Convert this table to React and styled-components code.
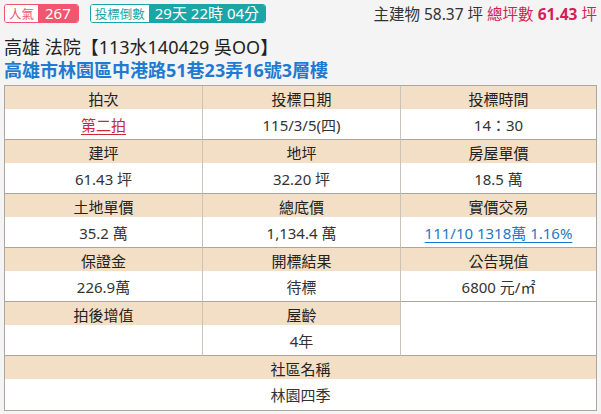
import React from "react";
import styled, { createGlobalStyle } from "styled-components";

const Global = createGlobalStyle`
  html, body { margin: 0; padding: 0; background: #f4f4f4; }
  body { font-family: "Noto Sans", "Noto Sans CJK TC", sans-serif; color: #333; }
`;

const Page = styled.div`
  padding: 4px 4px 0 4px;
`;

const TopBar = styled.div`
  display: flex;
  justify-content: space-between;
  align-items: center;
  height: 19px;
`;

const Badges = styled.div`
  display: flex;
  gap: 11px;
`;

const Badge = styled.div`
  display: flex;
  height: 19px;
  border: 1px solid ${(p) => p.$color};
  border-radius: 3px;
  overflow: hidden;
  box-sizing: border-box;
`;

const BadgeLabel = styled.span`
  display: flex;
  align-items: center;
  padding: 0 4px;
  background: #fff;
  color: ${(p) => p.$color};
  font-size: 12.5px;
  font-family: "Noto Sans CJK TC", sans-serif;
`;

const BadgeValue = styled.span`
  display: flex;
  align-items: center;
  padding: 0 ${(p) => p.$pad || 6}px;
  background: ${(p) => p.$color};
  color: #fff;
  font-size: 15px;
  line-height: 17px;
  white-space: nowrap;
  font-family: "Noto Sans", "Noto Sans CJK TC", sans-serif;
`;

const Area = styled.div`
  font-size: 15.5px;
  color: #333;
  font-family: "Noto Sans", "Noto Sans CJK TC", sans-serif;
  white-space: nowrap;
`;

const Total = styled.span`
  color: #d21f55;
  b { font-weight: 700; }
`;

const Title = styled.div`
  margin-top: 13px;
  font-size: 18px;
  line-height: 23px;
  color: #222;
  white-space: nowrap;
`;

const Address = styled.div`
  font-size: 18px;
  line-height: 23px;
  font-weight: 700;
  color: #1f7bd1;
  white-space: nowrap;
`;

const Table = styled.div`
  margin-top: 3px;
  display: grid;
  grid-template-columns: 198px 198px 1fr;
  border: 1px solid #aca79c;
  background: #fff;
`;

const Cell = styled.div`
  display: flex;
  align-items: center;
  justify-content: center;
  font-size: 15px;
  color: #333;
  box-sizing: border-box;
  white-space: nowrap;
  grid-column: ${(p) => p.$span || "auto"};
  grid-row: ${(p) => (p.$rows ? `span ${p.$rows}` : "auto")};
  border-right: ${(p) => (p.$last ? "none" : "1px solid #c9c4ba")};
`;

const Head = styled(Cell)`
  height: 23px;
  background: #f3dfc6;
  color: #222;
  padding-top: 1px;
`;

const Data = styled(Cell)`
  height: 31px;
  background: #fff;
  border-bottom: ${(p) => (p.$end ? "none" : "1px solid #aca79c")};
`;

const Blank = styled(Cell)`
  background: #fff;
  border-bottom: 1px solid #aca79c;
`;

const RedLink = styled.span`
  color: #c8283c;
  text-decoration: underline;
  text-underline-offset: 3px;
`;

const BlueLink = styled.span`
  color: #1e78c8;
  text-decoration: underline;
  text-underline-offset: 3px;
`;

const groups = [
  [
    ["拍次", <RedLink>第二拍</RedLink>],
    ["投標日期", "115/3/5(四)"],
    ["投標時間", "14：30"],
  ],
  [
    ["建坪", "61.43 坪"],
    ["地坪", "32.20 坪"],
    ["房屋單價", "18.5 萬"],
  ],
  [
    ["土地單價", "35.2 萬"],
    ["總底價", "1,134.4 萬"],
    ["實價交易", <BlueLink>111/10 1318萬 1.16%</BlueLink>],
  ],
  [
    ["保證金", "226.9萬"],
    ["開標結果", "待標"],
    ["公告現值", "6800 元/㎡"],
  ],
];

export default function App() {
  return (
    <Page>
      <Global />
      <TopBar>
        <Badges>
          <Badge $color="#f0566e">
            <BadgeLabel $color="#f0566e">人氣</BadgeLabel>
            <BadgeValue $color="#f0566e" $pad={7}>267</BadgeValue>
          </Badge>
          <Badge $color="#1aa6a6">
            <BadgeLabel $color="#1aa6a6">投標倒數</BadgeLabel>
            <BadgeValue $color="#1aa6a6" $pad={6}>29天 22時 04分</BadgeValue>
          </Badge>
        </Badges>
        <Area>
          主建物 58.37 坪 <Total>總坪數 <b>61.43</b> 坪</Total>
        </Area>
      </TopBar>
      <Title>高雄 法院【113水140429 吳OO】</Title>
      <Address>高雄市林園區中港路51巷23弄16號3層樓</Address>
      <Table>
        {groups.map((g, gi) => (
          <React.Fragment key={gi}>
            {g.map(([h], i) => (
              <Head key={"h" + i} $last={i === 2}>{h}</Head>
            ))}
            {g.map(([, d], i) => (
              <Data key={"d" + i} $last={i === 2}>{d}</Data>
            ))}
          </React.Fragment>
        ))}
        <Head>拍後增值</Head>
        <Head>屋齡</Head>
        <Blank $last $rows={2} />
        <Data></Data>
        <Data>4年</Data>
        <Head $span="1 / -1" $last>社區名稱</Head>
        <Data $span="1 / -1" $last $end>林園四季</Data>
      </Table>
    </Page>
  );
}
